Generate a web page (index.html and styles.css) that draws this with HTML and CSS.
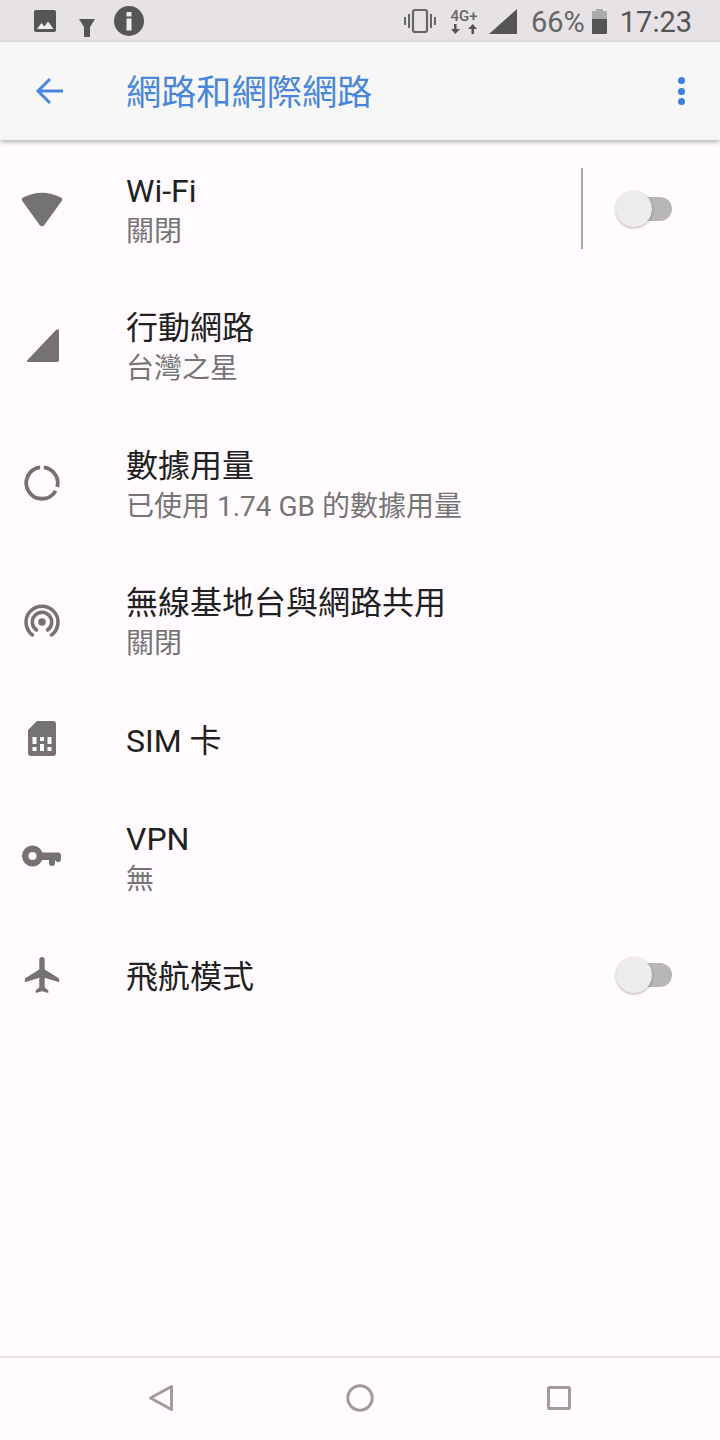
FILE: index.html
```html
<!DOCTYPE html>
<html lang="zh-Hant">
<head>
  <meta charset="UTF-8" />
  <meta name="viewport" content="width=device-width, initial-scale=1.0"/>
  <title>網路和網際網路</title>
  <link rel="stylesheet" href="styles.css">
</head>
<body>
  <div class="pantalla">
    <div class="status">
      <div class="status-left">
        <svg class="st-pic" width="24" height="24" viewBox="0 0 24 24"><path fill="#555" d="M3 1h18q2 0 2 2v18q0 2-2 2H3q-2 0-2-2V3q0-2 2-2z"/><path fill="#efecef" d="M4 20l4.500-6 3 3.500 3.500-5 5.500 7.500z"/></svg>
        <svg class="st-filter" width="18" height="20" viewBox="0 0 18 20"><path fill="#555" d="M1 1h16l-5 8v10H6V9z"/></svg>
        <svg class="st-info" width="32" height="32" viewBox="0 0 32 32"><circle cx="16" cy="16" r="15" fill="#555"/><rect x="13.500" y="13.500" width="5" height="12" fill="#efecef"/><rect x="13.500" y="7" width="5" height="4.500" fill="#efecef"/></svg>
      </div>
      <div class="status-right">
        <svg class="st-vib" width="32" height="26" viewBox="0 0 32 26"><rect x="9" y="2" width="14" height="22" rx="2" fill="none" stroke="#666" stroke-width="2.200"/><path stroke="#666" stroke-width="2" d="M5 6v14M1 9v8M27 6v14M31 9v8"/></svg>
        <div class="st-net">
          <span class="st-4g">4G+</span>
          <svg width="26" height="10" viewBox="0 0 26 10"><path fill="#555" d="M3 0h2.500v5H9L4.250 10 0 5h3zM20.500 10H23V5h3l-4.250-5L17 5h3.500z"/></svg>
        </div>
        <svg class="st-signal" width="28" height="25" viewBox="0 0 28 25"><path fill="#555" d="M28 0v25H0z"/></svg>
        <span class="st-pct">66%</span>
        <svg class="st-bat" width="15" height="25" viewBox="0 0 15 25"><path fill="#aaa" d="M4 0h7v2h3q1 0 1 1v7H0V3q0-1 1-1h3z"/><path fill="#555" d="M0 10h15v14q0 1-1 1H1q-1 0-1-1z"/></svg>
        <span class="st-time">17:23</span>
      </div>
    </div>

    <div class="toolbar">
      <svg class="tb-back" width="30" height="30" viewBox="0 0 30 30"><path fill="none" stroke="#4a86dc" stroke-width="3" d="M28 15H4M15 3L3 15l12 12"/></svg>
      <h1 class="tb-title">網路和網際網路</h1>
      <div class="tb-menu"><span></span><span></span><span></span></div>
    </div>

    <div class="lista">
      <div class="fila doble">
        <svg class="icono" viewBox="0 0 48 48"><path d="M21.600 40L4 15.500Q3 13.500 5 12.500Q24 3 43 12.500Q45 13.500 44 15.500L26.400 40Q24 42.500 21.600 40Z"/></svg>
        <div class="textos">
          <div class="titulo">Wi-Fi</div>
          <div class="sub">關閉</div>
        </div>
        <div class="divisor"></div>
        <div class="switch"><span class="pista"></span><span class="perilla"></span></div>
      </div>

      <div class="fila doble">
        <svg class="icono" viewBox="0 0 48 48"><path d="M41 9V38Q41 40 39 40H10Q8 40 9.500 38L38 8Q41 6 41 9Z"/></svg>
        <div class="textos">
          <div class="titulo">行動網路</div>
          <div class="sub">台灣之星</div>
        </div>
      </div>

      <div class="fila doble">
        <svg class="icono" viewBox="0 0 48 48"><g fill="none" stroke="#757275" stroke-width="3.800"><path d="M25.900 7.370A15.750 15.750 0 0 1 39.200 27.100"/><path d="M37.640 30.900A15.750 15.750 0 1 1 22.080 7.370"/></g></svg>
        <div class="textos">
          <div class="titulo">數據用量</div>
          <div class="sub">已使用 1.74 GB 的數據用量</div>
        </div>
      </div>

      <div class="fila doble">
        <svg class="icono" viewBox="0 0 48 48"><g fill="none" stroke="#757275" stroke-width="3.500" stroke-linecap="round"><path d="M14.500 38A16 16 0 1 1 33.500 38"/><path d="M18.500 33A9.700 9.700 0 1 1 29.500 33"/></g><circle cx="24" cy="25" r="3.800"/></svg>
        <div class="textos">
          <div class="titulo">無線基地台與網路共用</div>
          <div class="sub">關閉</div>
        </div>
      </div>

      <div class="fila simple">
        <svg class="icono" viewBox="0 0 48 48"><path d="M19 6H35Q38 6 38 9V38Q38 41 35 41H13Q10 41 10 38V15Z"/><path fill="#fffbfe" d="M14.500 22h4v7h-4zM14.500 32h4v4h-4zM22 22h4v4h-4zM22 29h4v7h-4zM29.500 22h4v7h-4zM29.500 32h4v4h-4z"/></svg>
        <div class="textos">
          <div class="titulo">SIM 卡</div>
        </div>
      </div>

      <div class="fila doble">
        <svg class="icono" viewBox="0 0 48 48"><circle cx="14.500" cy="23" r="7.250" fill="none" stroke="#757275" stroke-width="6.500"/><rect x="20" y="19.500" width="23" height="7.500" rx="3"/><rect x="31" y="22" width="6" height="11" rx="3"/><rect x="37" y="22" width="6" height="7" rx="3"/></svg>
        <div class="textos">
          <div class="titulo">VPN</div>
          <div class="sub">無</div>
        </div>
      </div>

      <div class="fila simple">
        <svg class="icono" viewBox="-1.830 -1.330 26.670 26.670"><path d="M21 16v-2l-8-5V3.500c0-.83-.67-1.500-1.500-1.500S10 2.670 10 3.500V9l-8 5v2l8-2.500V19l-2 1.500V22l3.500-1 3.500 1v-1.500L13 19v-5.500l8 2.500z"/></svg>
        <div class="textos">
          <div class="titulo">飛航模式</div>
        </div>
        <div class="switch"><span class="pista"></span><span class="perilla"></span></div>
      </div>
    </div>

    <div class="navbar">
      <svg width="24" height="28" viewBox="0 0 24 28"><path fill="none" stroke="#9e9c9e" stroke-width="3" stroke-linejoin="round" d="M22.500 2.500V25.500L1.500 14Z"/></svg>
      <svg width="28" height="28" viewBox="0 0 28 28"><circle cx="14" cy="14" r="12.200" fill="none" stroke="#9e9c9e" stroke-width="3"/></svg>
      <svg width="24" height="24" viewBox="0 0 24 24"><rect x="1.500" y="1.500" width="21" height="21" rx="1" fill="none" stroke="#9e9c9e" stroke-width="3"/></svg>
    </div>
  </div>
</body>
</html>
```

FILE: styles.css
```css
* {
  box-sizing: border-box;
}

body {
  font-family: Roboto, 'Noto Sans CJK TC', sans-serif;
  background-color: #fffbfe;
  margin: 0;
}

.pantalla {
  width: 720px;
  height: 1440px;
  display: flex;
  flex-direction: column;
  overflow: hidden;
}

.status {
  height: 42px;
  flex: none;
  background-color: #e6e2e6;
  display: flex;
  justify-content: space-between;
  align-items: center;
  color: #666;
}

.status-left, .status-right {
  display: flex;
  align-items: center;
}

.status-left {
  padding-left: 33px;
}

.status-right {
  padding-right: 28px;
}

.st-filter {
  margin-left: 21px;
  margin-top: 13px;
}

.st-info {
  margin-left: 17px;
}

.st-net {
  width: 28px;
  margin-left: 14px;
  display: flex;
  flex-direction: column;
  align-items: center;
  gap: 1px;
}

.st-4g {
  font-size: 15px;
  line-height: 14px;
  font-weight: 500;
}

.st-signal {
  margin-left: 11px;
}

.st-pct {
  font-size: 29px;
  margin-left: 14px;
  padding-top: 2px;
}

.st-bat {
  margin-left: 7px;
}

.st-time {
  font-size: 29px;
  color: #555;
  margin-left: 13px;
  padding-top: 2px;
}

.toolbar {
  height: 98px;
  flex: none;
  background-color: #f7f7f7;
  box-shadow: 0 2px 5px rgba(0,0,0,0.3);
  display: flex;
  align-items: center;
  position: relative;
  padding-left: 35px;
}

.tb-title {
  font-size: 35.2px;
  font-weight: 400;
  color: #4a86dc;
  margin: 0 0 4px 61px;
}

.tb-menu {
  margin-left: auto;
  margin-right: 35px;
  display: flex;
  flex-direction: column;
  gap: 3.5px;
}

.tb-menu span {
  width: 7px;
  height: 7px;
  border-radius: 50%;
  background-color: #3f7fe0;
}

.lista {
  flex: 1;
}

.fila {
  display: flex;
  align-items: center;
  padding-left: 18px;
}

.doble {
  height: 137.5px;
}

.simple {
  height: 98px;
}

.icono {
  width: 48px;
  height: 48px;
  flex: none;
  fill: #757275;
  margin-right: 60px;
}

.textos {
  flex: 1;
  padding-top: 4px;
}

.titulo {
  font-size: 32px;
  line-height: 42px;
  color: #212121;
}

.sub {
  font-size: 28px;
  line-height: 40px;
  color: #757575;
}

.divisor {
  width: 2px;
  height: 81px;
  background-color: #aaa7aa;
  margin-right: 33px;
}

.switch {
  width: 56px;
  height: 36px;
  margin-right: 48px;
  position: relative;
  flex: none;
}

.pista {
  position: absolute;
  left: 18px;
  right: 0;
  top: 6px;
  height: 24px;
  border-radius: 12px;
  background-color: #b9b6b9;
}

.perilla {
  position: absolute;
  left: 0;
  top: 0;
  width: 36px;
  height: 36px;
  border-radius: 50%;
  background-color: #ececec;
  box-shadow: 0 1px 3px rgba(0,0,0,0.3);
}

.navbar {
  height: 84px;
  flex: none;
  border-top: 2px solid #e4e0e4;
  display: flex;
  align-items: center;
  justify-content: space-between;
  padding: 0 149px 2px 149px;
}
```
